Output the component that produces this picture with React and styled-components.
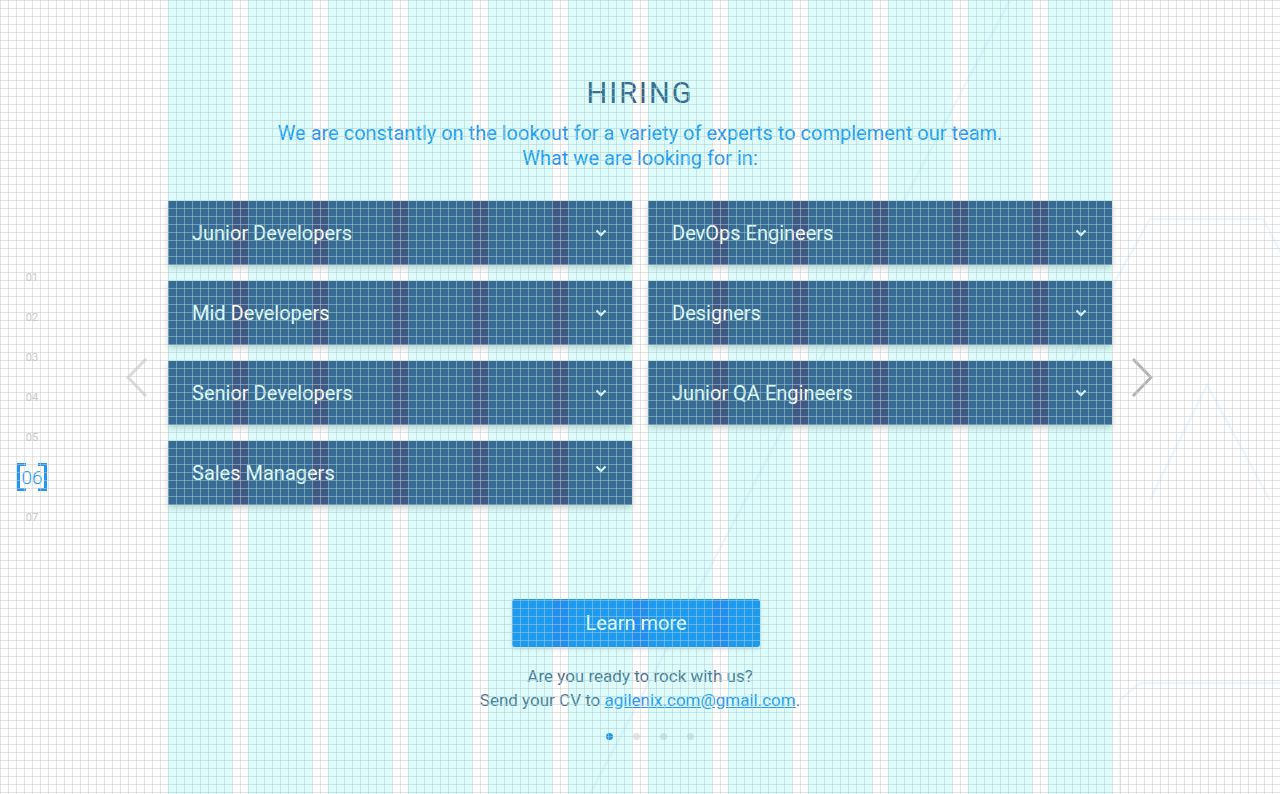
import React from 'react'
import styled, { createGlobalStyle } from 'styled-components'

const GlobalStyle = createGlobalStyle`
html, body {
    margin: 0;
    padding: 0;
    background: #fff;
    overflow: hidden;
}
body {
    font-family: Roboto, "Noto Sans", "Liberation Sans", sans-serif;
}
* {
    box-sizing: border-box;
}
`

const Page = styled.div`
position: relative;
width: 100vw;
height: 100vh;
display: grid;
grid-template-columns: 1fr 944px 1fr;
overflow: hidden;
`

const Decor = styled.svg`
position: absolute;
inset: 0;
width: 100%;
height: 100%;
z-index: 0;
pointer-events: none;
`

// design grid laid over everything: 12 columns + 8px lines
const GridOverlay = styled.div`
position: absolute;
inset: 0;
z-index: 5;
pointer-events: none;
display: flex;
justify-content: center;
background-image:
    linear-gradient(to right, rgba(200, 200, 200, .5) 1px, transparent 1px),
    linear-gradient(to bottom, rgba(200, 200, 200, .5) 1px, transparent 1px);
background-size: 8px 8px;
`

const Columns = styled.div`
width: 944px;
height: 100%;
background-image: repeating-linear-gradient(
    to right,
    rgba(9, 232, 240, .13) 0 64px,
    transparent 64px 80px
);
`

const Rail = styled.div`
position: relative;
z-index: 1;
display: flex;
align-items: center;
justify-content: ${p => p.$side === 'left' ? 'space-between' : 'flex-start'};
padding: ${p => p.$side === 'left' ? '0 20px 0 17px' : '0 0 0 19px'};
`

const SideNav = styled.ul`
list-style: none;
margin: 0;
padding: 0;
width: 30px;
display: flex;
flex-direction: column;
`

const NavItem = styled.li`
height: 40px;
display: flex;
align-items: center;
justify-content: center;
font-size: ${p => p.$active ? '19px' : '11px'};
font-weight: ${p => p.$active ? 300 : 400};
color: ${p => p.$active ? '#2196f3' : '#c8c8c8'};
`

const Bracket = styled.span`
position: relative;
display: flex;
align-items: center;
justify-content: center;
width: 30px;
height: 28px;
&::before,
&::after {
    content: '';
    position: absolute;
    top: 0;
    bottom: 0;
    width: 6px;
    border: 3px solid #2196f3;
}
&::before {
    left: 0;
    border-right: none;
}
&::after {
    right: 0;
    border-left: none;
}
`

const ArrowBtn = styled.button`
border: none;
background: none;
padding: 0;
margin-bottom: 38px;
display: block;
cursor: pointer;
color: ${p => p.$side === 'left' ? '#dadada' : '#b4b4b4'};
svg {
    display: block;
}
`

const Main = styled.main`
position: relative;
z-index: 1;
display: flex;
flex-direction: column;
align-items: center;
padding-top: 76px;
`

const Title = styled.h2`
margin: 0;
font-size: 29px;
line-height: 35px;
font-weight: 400;
letter-spacing: 2px;
color: #3a6183;
`

const Lead = styled.p`
margin: 10px 0 0;
font-size: 20px;
line-height: 25px;
color: #2196f3;
text-align: center;
`

const CardGrid = styled.div`
width: 100%;
margin-top: 30px;
display: grid;
grid-template-columns: 1fr 1fr;
grid-auto-rows: 64px;
gap: 16px;
`

const Card = styled.div`
display: flex;
align-items: center;
justify-content: space-between;
padding: 0 25px 0 24px;
background: #3d5a86;
color: #fff;
font-size: 20px;
box-shadow: 0 3px 6px rgba(0, 0, 0, .2);
cursor: pointer;
svg {
    margin-top: ${p => p.$last ? '-9px' : '-1px'};
}
`

const LearnButton = styled.button`
margin-top: 94px;
margin-right: 8px;
width: 248px;
height: 48px;
border: none;
border-radius: 3px;
background: #1f8ff0;
color: #fff;
font-family: inherit;
font-size: 20px;
box-shadow: 0 2px 4px rgba(0, 0, 0, .15);
cursor: pointer;
`

const Note = styled.p`
margin: 17px 0 0;
font-size: 17px;
line-height: 24px;
color: #50708c;
text-align: center;
a {
    color: #2196f3;
}
`

const Dots = styled.div`
margin-top: 21px;
padding-left: 19px;
display: flex;
gap: 20px;
`

const Dot = styled.span`
width: 7px;
height: 7px;
border-radius: 50%;
background: ${p => p.$active ? '#1f8ff0' : '#e4e4e4'};
`

const jobs = [
    'Junior Developers',
    'DevOps Engineers',
    'Mid Developers',
    'Designers',
    'Senior Developers',
    'Junior QA Engineers',
    'Sales Managers',
]

const Chevron = () => (
    <svg width="12" height="8" viewBox="0 0 12 8" fill="none">
        <polyline points="1.5,1.5 6,6 10.5,1.5" stroke="currentColor" strokeWidth="2" />
    </svg>
)

const Arrow = ({ side }) => (
    <ArrowBtn $side={side} aria-label={side}>
        <svg width="22" height="40" viewBox="0 0 22 40" fill="none">
            {side === 'left'
                ? <polyline points="20,1 2,19.5 20,38" stroke="currentColor" strokeWidth="3" />
                : <polyline points="2,1 20,19.5 2,38" stroke="currentColor" strokeWidth="3" />}
        </svg>
    </ArrowBtn>
)

function App() {
    return (
        <Page>
            <GlobalStyle />
            <Decor viewBox="0 0 1280 794" preserveAspectRatio="none">
                <g stroke="#eef7fd" strokeWidth="2.5" fill="none">
                    <line x1="1010" y1="0" x2="590" y2="794" />
                    <polyline points="1060,380 1150,219 1263,219 1290,270" />
                    <polyline points="1150,500 1207,385 1270,500" />
                    <polyline points="1120,794 1120,700 1140,683 1280,683" />
                </g>
            </Decor>

            <Rail $side="left">
                <SideNav>
                    {['01', '02', '03', '04', '05', '06', '07'].map(n => (
                        <NavItem key={n} $active={n === '06'}>
                            {n === '06' ? <Bracket>{n}</Bracket> : n}
                        </NavItem>
                    ))}
                </SideNav>
                <Arrow side="left" />
            </Rail>

            <Main>
                <Title>HIRING</Title>
                <Lead>
                    We are constantly on the lookout for a variety of experts to complement our team.<br />
                    What we are looking for in:
                </Lead>
                <CardGrid>
                    {jobs.map((job, i) => (
                        <Card key={job} $last={i === jobs.length - 1}>
                            <span>{job}</span>
                            <Chevron />
                        </Card>
                    ))}
                </CardGrid>
                <LearnButton>Learn more</LearnButton>
                <Note>
                    Are you ready to rock with us?<br />
                    Send your CV to <a href="mailto:agilenix.com@gmail.com">agilenix.com@gmail.com</a>.
                </Note>
                <Dots>
                    <Dot $active />
                    <Dot />
                    <Dot />
                    <Dot />
                </Dots>
            </Main>

            <Rail $side="right">
                <Arrow side="right" />
            </Rail>

            <GridOverlay>
                <Columns />
            </GridOverlay>
        </Page>
    )
}

export default App
